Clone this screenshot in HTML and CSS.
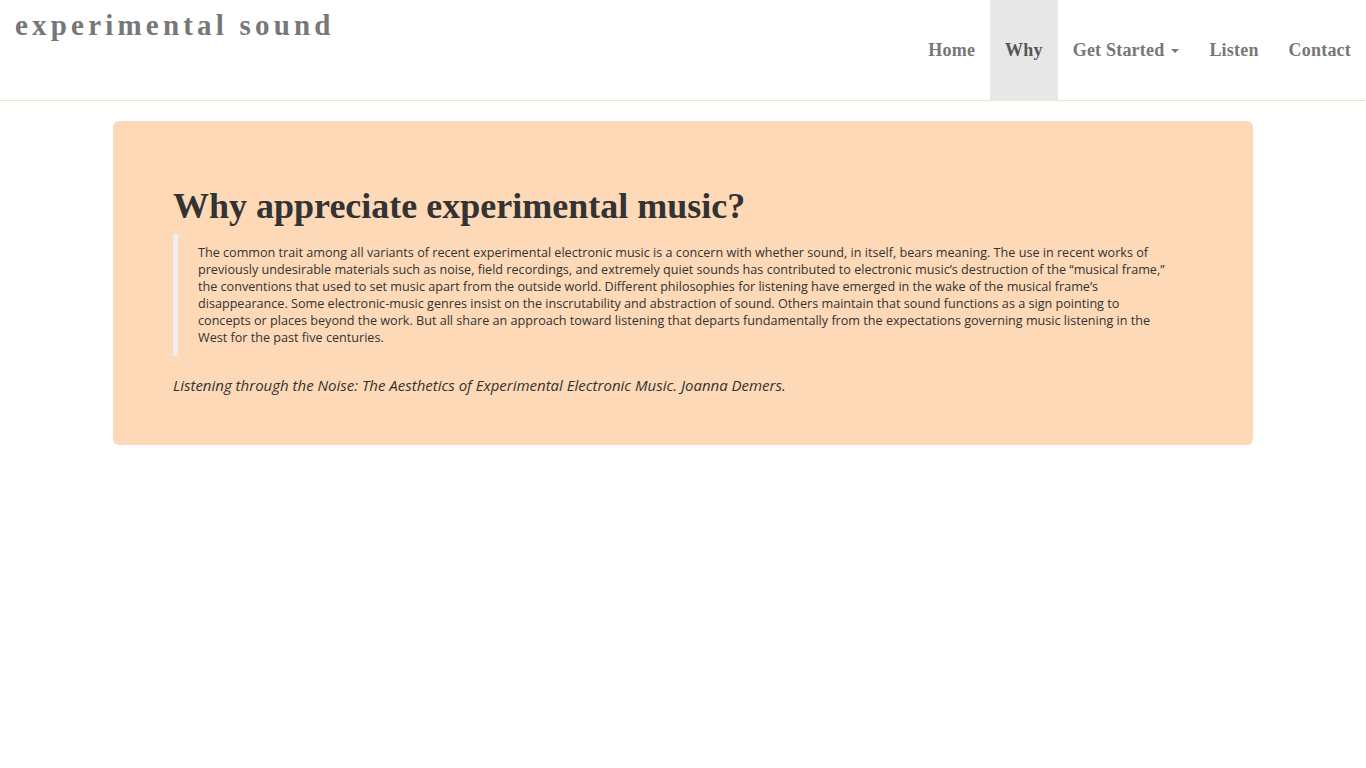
FILE: index.html
```html
<!DOCTYPE html>
<html lang="en">
<head>
<meta charset="utf-8">
<title>experimental sound - Why</title>
<link rel="stylesheet" href="styles.css">
</head>
<body>
<header class="navbar">
  <a class="brand" href="#">experimental sound</a>
  <nav class="nav">
    <a class="nav-item" href="#">Home</a>
    <a class="nav-item active" href="#">Why</a>
    <a class="nav-item" href="#">Get Started <span class="caret"></span></a>
    <a class="nav-item" href="#">Listen</a>
    <a class="nav-item" href="#">Contact</a>
  </nav>
</header>
<main class="container">
  <section class="jumbotron">
    <h1 class="title">Why appreciate experimental music?</h1>
    <blockquote class="quote">
      <p>The common trait among all variants of recent experimental electronic music is a concern with whether sound, in itself, bears meaning. The use in recent works of previously undesirable materials such as noise, field recordings, and extremely quiet sounds has contributed to electronic music’s destruction of the “musical frame,” the conventions that used to set music apart from the outside world. Different philosophies for listening have emerged in the wake of the musical frame’s disappearance. Some electronic-music genres insist on the inscrutability and abstraction of sound. Others maintain that sound functions as a sign pointing to concepts or places beyond the work. But all share an approach toward listening that departs fundamentally from the expectations governing music listening in the West for the past five centuries.</p>
    </blockquote>
    <p class="cite">Listening through the Noise: The Aesthetics of Experimental Electronic Music. Joanna Demers.</p>
  </section>
</main>
</body>
</html>
```
FILE: styles.css
```css
* { box-sizing: border-box; }
html, body { margin: 0; padding: 0; background: #fff; }
body { font-family: "Open Sans", "Noto Sans", sans-serif; color: #333; }

.navbar {
  display: flex;
  justify-content: space-between;
  align-items: flex-start;
  height: 101px;
  border-bottom: 1px solid #f6e3c9;
}
.brand {
  font-family: "Liberation Serif", "DejaVu Serif", serif;
  font-weight: bold;
  font-size: 29px;
  letter-spacing: 4.2px;
  color: #777;
  text-decoration: none;
  padding: 9px 15px 0 15px;
  line-height: 32px;
}
.nav { display: flex; height: 100px; }
.nav-item {
  display: flex;
  align-items: center;
  padding: 0 15px;
  font-family: "Liberation Serif", "DejaVu Serif", serif;
  font-weight: bold;
  font-size: 18px;
  letter-spacing: 0.2px;
  color: #777;
  text-decoration: none;
}
.nav-item.active { background: #e7e7e7; color: #555; }
.caret {
  display: inline-block;
  width: 0; height: 0;
  margin-left: 7px;
  margin-top: 2px;
  border-top: 4px solid #777;
  border-left: 4px solid transparent;
  border-right: 4px solid transparent;
}

.container { width: 1170px; margin: 20px auto 0; padding: 0 15px; }
.jumbotron {
  background: #fed9b7;
  border-radius: 6px;
  padding: 60px 60px 50px;
}
.title {
  margin: 5px 0 8px;
  font-family: "Liberation Serif", "DejaVu Serif", serif;
  font-weight: bold;
  font-size: 36px;
  line-height: 40px;
  color: #333;
}
.quote {
  margin: 0 0 19px;
  padding: 10px 20px;
  border-left: 5px solid #eee;
}
.quote p {
  margin: 0;
  font-size: 12.62px;
  line-height: 17px;
  color: #333;
}
.cite {
  margin: 0;
  font-style: italic;
  font-size: 15px;
  line-height: 20px;
  color: #333;
}
```
